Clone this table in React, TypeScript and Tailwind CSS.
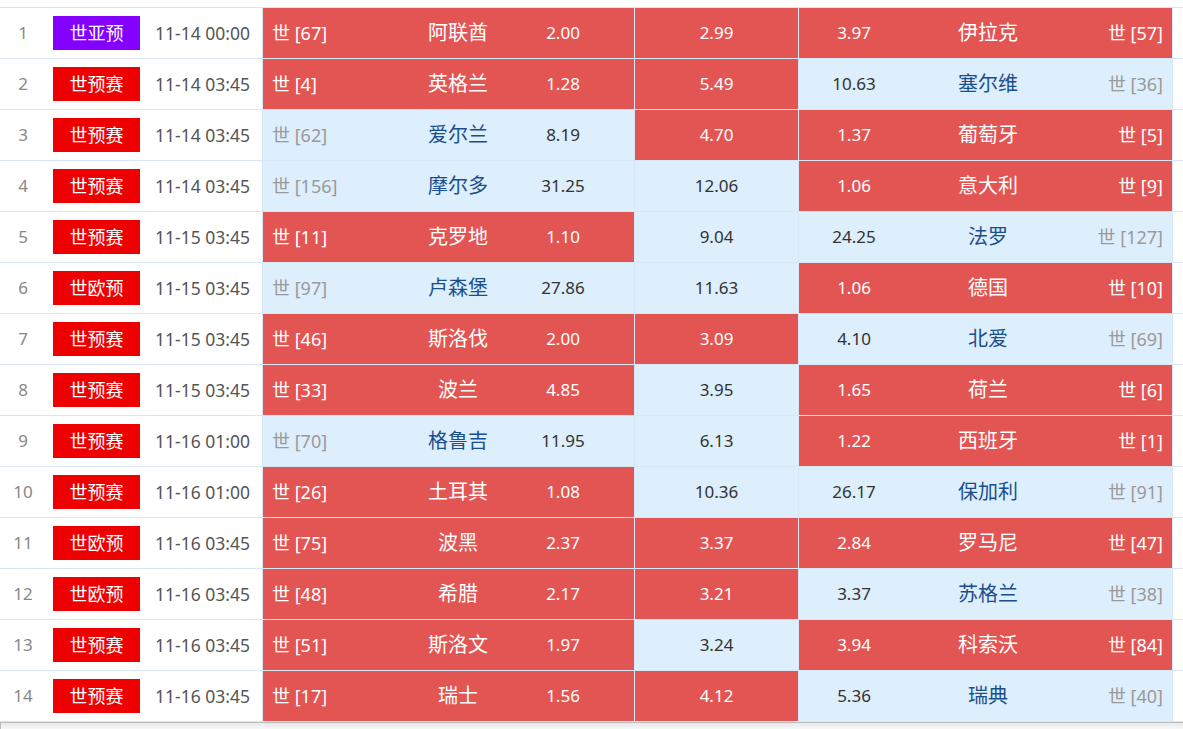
type Tone = "r" | "b";

interface Match {
  no: number;
  league: string;
  time: string;
  hRank: string;
  home: string;
  hOdds: string;
  draw: string;
  aOdds: string;
  away: string;
  aRank: string;
  tones: [Tone, Tone, Tone];
}

const matches: Match[] = [
  { no: 1, league: "世亚预", time: "11-14 00:00", hRank: "世 [67]", home: "阿联酋", hOdds: "2.00", draw: "2.99", aOdds: "3.97", away: "伊拉克", aRank: "世 [57]", tones: ["r", "r", "r"] },
  { no: 2, league: "世预赛", time: "11-14 03:45", hRank: "世 [4]", home: "英格兰", hOdds: "1.28", draw: "5.49", aOdds: "10.63", away: "塞尔维", aRank: "世 [36]", tones: ["r", "r", "b"] },
  { no: 3, league: "世预赛", time: "11-14 03:45", hRank: "世 [62]", home: "爱尔兰", hOdds: "8.19", draw: "4.70", aOdds: "1.37", away: "葡萄牙", aRank: "世 [5]", tones: ["b", "r", "r"] },
  { no: 4, league: "世预赛", time: "11-14 03:45", hRank: "世 [156]", home: "摩尔多", hOdds: "31.25", draw: "12.06", aOdds: "1.06", away: "意大利", aRank: "世 [9]", tones: ["b", "b", "r"] },
  { no: 5, league: "世预赛", time: "11-15 03:45", hRank: "世 [11]", home: "克罗地", hOdds: "1.10", draw: "9.04", aOdds: "24.25", away: "法罗", aRank: "世 [127]", tones: ["r", "b", "b"] },
  { no: 6, league: "世欧预", time: "11-15 03:45", hRank: "世 [97]", home: "卢森堡", hOdds: "27.86", draw: "11.63", aOdds: "1.06", away: "德国", aRank: "世 [10]", tones: ["b", "b", "r"] },
  { no: 7, league: "世预赛", time: "11-15 03:45", hRank: "世 [46]", home: "斯洛伐", hOdds: "2.00", draw: "3.09", aOdds: "4.10", away: "北爱", aRank: "世 [69]", tones: ["r", "r", "b"] },
  { no: 8, league: "世预赛", time: "11-15 03:45", hRank: "世 [33]", home: "波兰", hOdds: "4.85", draw: "3.95", aOdds: "1.65", away: "荷兰", aRank: "世 [6]", tones: ["r", "b", "r"] },
  { no: 9, league: "世预赛", time: "11-16 01:00", hRank: "世 [70]", home: "格鲁吉", hOdds: "11.95", draw: "6.13", aOdds: "1.22", away: "西班牙", aRank: "世 [1]", tones: ["b", "b", "r"] },
  { no: 10, league: "世预赛", time: "11-16 01:00", hRank: "世 [26]", home: "土耳其", hOdds: "1.08", draw: "10.36", aOdds: "26.17", away: "保加利", aRank: "世 [91]", tones: ["r", "b", "b"] },
  { no: 11, league: "世欧预", time: "11-16 03:45", hRank: "世 [75]", home: "波黑", hOdds: "2.37", draw: "3.37", aOdds: "2.84", away: "罗马尼", aRank: "世 [47]", tones: ["r", "r", "r"] },
  { no: 12, league: "世欧预", time: "11-16 03:45", hRank: "世 [48]", home: "希腊", hOdds: "2.17", draw: "3.21", aOdds: "3.37", away: "苏格兰", aRank: "世 [38]", tones: ["r", "r", "b"] },
  { no: 13, league: "世预赛", time: "11-16 03:45", hRank: "世 [51]", home: "斯洛文", hOdds: "1.97", draw: "3.24", aOdds: "3.94", away: "科索沃", aRank: "世 [84]", tones: ["r", "b", "r"] },
  { no: 14, league: "世预赛", time: "11-16 03:45", hRank: "世 [17]", home: "瑞士", hOdds: "1.56", draw: "4.12", aOdds: "5.36", away: "瑞典", aRank: "世 [40]", tones: ["r", "r", "b"] },
];

const cellBg = (t: Tone) => (t === "r" ? "bg-[#e35553]" : "bg-[#ddeefc]");
const rankText = (t: Tone) => (t === "r" ? "text-white" : "text-[#9a9a9a]");
const nameText = (t: Tone) => (t === "r" ? "text-white" : "text-[#1b4f8c]");
const oddsText = (t: Tone) => (t === "r" ? "text-white" : "text-[#333333]");

function Row({ m }: { m: Match }) {
  const [h, d, a] = m.tones;
  return (
    <div className="flex h-[51px] border-b border-[#d9e6f5]">
      <div className="w-[46px] flex items-center justify-center text-[17px] text-[#888888]">{m.no}</div>
      <div className="w-[101px] flex items-center justify-center">
        <span
          className={`w-[87px] h-[34px] flex items-center justify-center text-white text-[18px] ${
            m.league === "世亚预" ? "bg-[#8400ff]" : "bg-[#ef0000]"
          }`}
        >
          {m.league}
        </span>
      </div>
      <div className="w-[115px] flex items-center pl-[8px] text-[17.5px] text-[#555555]">{m.time}</div>

      {/* home */}
      <div className={`w-[372px] flex items-center border-l border-[#d9e6f5] ${cellBg(h)}`}>
        <div className={`w-[130px] pl-[9px] text-[18px] ${rankText(h)}`}>{m.hRank}</div>
        <div className={`w-[130px] text-center text-[20px] ${nameText(h)}`}>{m.home}</div>
        <div className={`w-[80px] text-center text-[17px] ${oddsText(h)}`}>{m.hOdds}</div>
      </div>

      {/* draw */}
      <div className={`w-[164px] flex items-center justify-center border-l border-[#d9e6f5] text-[17px] ${cellBg(d)} ${oddsText(d)}`}>
        {m.draw}
      </div>

      {/* away */}
      <div className={`w-[375px] flex items-center border-l border-r border-[#d9e6f5] ${cellBg(a)}`}>
        <div className={`w-[110px] text-center text-[17px] ${oddsText(a)}`}>{m.aOdds}</div>
        <div className={`w-[158px] text-center text-[20px] ${nameText(a)}`}>{m.away}</div>
        <div className={`flex-1 text-right pr-[9px] text-[18px] ${rankText(a)}`}>{m.aRank}</div>
      </div>
      <div className="flex-1" />
    </div>
  );
}

export default function App() {
  return (
    <div
      className="w-[1183px] h-[729px] overflow-hidden bg-white pt-[7px]"
      style={{ fontFamily: '"Noto Sans", "Noto Sans CJK SC", sans-serif' }}
    >
      <div className="border-t border-[#d9e6f5]">
        {matches.map((m) => (
          <Row key={m.no} m={m} />
        ))}
      </div>
      <div className="h-[10px] border-t border-l border-[#bdbdbd] bg-gradient-to-b from-[#e9e9e9] to-white" />
    </div>
  );
}
